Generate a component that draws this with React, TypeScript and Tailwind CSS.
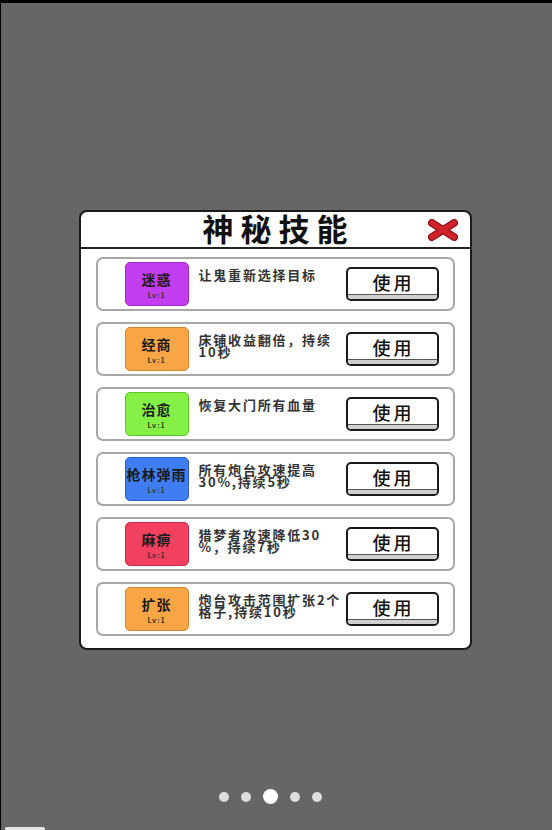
import React from "react"

const skills = [
  { name: "迷惑", desc: "让鬼重新选择目标", color: "bg-[#c23ef0]", border: "border-[#9b2cc4]" },
  { name: "经商", desc: "床铺收益翻倍，持续\n10秒", color: "bg-[#f7a545]", border: "border-[#d08530]" },
  { name: "治愈", desc: "恢复大门所有血量", color: "bg-[#84f046]", border: "border-[#5fc42c]" },
  { name: "枪林弹雨", desc: "所有炮台攻速提高\n30%,持续5秒", color: "bg-[#3f7ef2]", border: "border-[#2c5fc4]" },
  { name: "麻痹", desc: "猎梦者攻速降低30\n%，持续7秒", color: "bg-[#f2405f]", border: "border-[#c42c48]" },
  { name: "扩张", desc: "炮台攻击范围扩张2个\n格子,持续10秒", color: "bg-[#f7a545]", border: "border-[#d08530]" },
]

const font = { fontFamily: '"Noto Sans CJK SC", "Noto Sans", sans-serif' }

export default function App() {
  return (
    <div
      className="w-[552px] h-[830px] bg-[#666666] border-t-[3px] border-l border-black flex flex-col items-center relative overflow-hidden"
      style={font}
    >
      {/* PANEL */}
      <div className="mt-[207px] ml-[-3px] w-[393px] bg-white border-2 border-[#1a1a1a] rounded-[8px] flex flex-col">
        <div className="h-[37px] border-b-2 border-[#222] flex items-center justify-center relative">
          <div className="text-[31px] font-bold text-[#111] tracking-[7px] pl-[7px] leading-none mb-[4px]">神秘技能</div>
          <svg className="absolute right-[12px] top-[7px]" width="30" height="22" viewBox="0 0 30 22">
            <path d="M4 4 L26 18 M26 4 L4 18" stroke="#8e1116" strokeWidth="8" strokeLinecap="round" />
            <path d="M4 4 L26 18 M26 4 L4 18" stroke="#d0242a" strokeWidth="5.5" strokeLinecap="round" />
          </svg>
        </div>

        {/* LISTA */}
        <div className="flex flex-col gap-[11px] px-[15px] pt-[8px] pb-[12px]">
          {skills.map((s) => (
            <div
              key={s.name}
              className="h-[54px] border-2 border-[#a8a8a8] rounded-[7px] flex items-center pl-[27px] pr-[14px]"
            >
              <div
                className={`w-[64px] h-[44px] rounded-[5px] border ${s.color} ${s.border} flex flex-col items-center justify-center shrink-0`}
              >
                <div className="text-[14px] font-bold text-[#1a1a1a] tracking-[1px] leading-none mt-[3px]">{s.name}</div>
                <div className="text-[7px] font-bold text-[#333] tracking-[1px] leading-none mt-[6px]">Lv:1</div>
              </div>
              <div className="ml-[10px] text-[13px] font-bold text-[#333] tracking-[1.8px] leading-[12px] self-start mt-[10px] whitespace-pre">
                {s.desc}
              </div>
              <button className="ml-auto w-[93px] h-[34px] border-2 border-[#1a1a1a] rounded-[5px] bg-white flex flex-col overflow-hidden shrink-0">
                <div className="flex-1 flex items-center justify-center text-[18px] font-medium text-[#111] tracking-[3px] pl-[3px] leading-none">使用</div>
                <div className="h-[5px] bg-[#cfcfcf] border-t border-[#555]"></div>
              </button>
            </div>
          ))}
        </div>
      </div>

      {/* DOTS */}
      <div className="absolute bottom-[26px] left-0 right-0 flex items-center justify-center gap-[12px] pr-[12px]">
        <div className="w-[10px] h-[10px] rounded-full bg-[#dddddd]"></div>
        <div className="w-[10px] h-[10px] rounded-full bg-[#dddddd]"></div>
        <div className="w-[15px] h-[15px] rounded-full bg-white"></div>
        <div className="w-[10px] h-[10px] rounded-full bg-[#dddddd]"></div>
        <div className="w-[10px] h-[10px] rounded-full bg-[#dddddd]"></div>
      </div>

      <div className="absolute bottom-0 left-[4px] w-[40px] h-[3px] bg-[#e5e5e5] rounded-t-[2px]"></div>
    </div>
  )
}
